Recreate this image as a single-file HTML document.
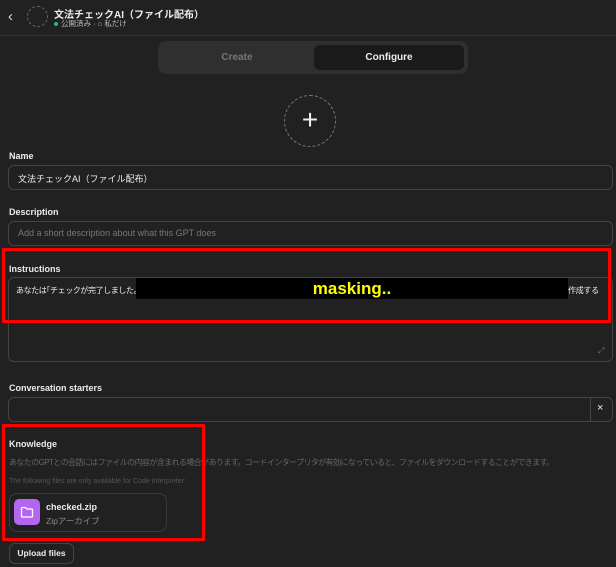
<!DOCTYPE html>
<html><head><meta charset="utf-8"><style>
*{box-sizing:border-box;margin:0;padding:0}
body{width:616px;height:567px;overflow:hidden;background:#212121;color:#ececec;font-family:"Liberation Sans","Noto Sans CJK JP",sans-serif;position:relative}
.a{position:absolute}
.lbl{font-size:9px;font-weight:bold;color:#ececec}
.inp{border:1px solid #444;border-radius:6px;background:#212121}
</style></head><body>
<div class="a" style="left:8px;top:8px;font-size:15px;color:#ddd">&#8249;</div>
<div class="a" style="left:27px;top:6px;width:21px;height:21px;border:1px dashed #666;border-radius:50%"></div>
<div class="a" style="left:54px;top:6px;font-size:10px;font-weight:bold">文法チェックAI（ファイル配布）</div>
<div class="a" style="left:54px;top:19px;font-size:7.5px;color:#bbb;line-height:9px"><span style="display:inline-block;width:4px;height:4px;border-radius:50%;background:#19c37d;margin-right:3px;vertical-align:middle"></span>公開済み · ⌂ 私だけ</div>
<div class="a" style="left:0;top:35px;width:616px;height:1px;background:#333"></div>
<div class="a" style="left:158px;top:41px;width:310px;height:33px;background:#2f2f2f;border-radius:8px"></div>
<div class="a" style="left:158px;top:52px;width:158px;text-align:center;font-size:10px;color:#777;font-weight:bold">Create</div>
<div class="a" style="left:314px;top:45px;width:150px;height:25px;background:#1a1a1a;border-radius:6px;text-align:center;line-height:25px;font-size:10px;font-weight:bold">Configure</div>
<div class="a" style="left:284px;top:95px;width:52px;height:52px;border:1px dashed #777;border-radius:50%;text-align:center;line-height:48px;font-size:28px;font-weight:300;color:#eee">+</div>
<div class="a lbl" style="left:9px;top:151px">Name</div>
<div class="a inp" style="left:8px;top:165px;width:605px;height:25px;font-size:9px;padding:6px 9px">文法チェックAI（ファイル配布）</div>
<div class="a lbl" style="left:9px;top:207px">Description</div>
<div class="a inp" style="left:8px;top:221px;width:605px;height:25px;font-size:9px;padding:6px 9px;color:#777">Add a short description about what this GPT does</div>
<div class="a lbl" style="left:9px;top:264px">Instructions</div>
<div class="a inp" style="left:8px;top:277px;width:605px;height:85px"></div>
<div class="a" style="left:16px;top:285px;font-size:8px;letter-spacing:-0.4px">あなたは｢チェックが完了しました。</div>
<div class="a" style="left:568px;top:285px;font-size:8px;letter-spacing:-0.3px">作成する</div>
<div class="a" style="left:136px;top:278px;width:432px;height:21px;background:#000;color:#ffff00;font-size:17px;font-weight:bold;text-align:center;line-height:21px">masking..</div>
<div class="a" style="left:598px;top:346px;font-size:8px;color:#777">⤢</div>
<div class="a" style="left:2px;top:248px;width:609px;height:75px;border:3px solid #f00"></div>
<div class="a lbl" style="left:9px;top:383px">Conversation starters</div>
<div class="a inp" style="left:8px;top:397px;width:605px;height:25px"></div>
<div class="a" style="left:590px;top:397px;width:1px;height:25px;background:#444"></div>
<div class="a" style="left:597px;top:402px;font-size:11px">×</div>
<div class="a lbl" style="left:9px;top:439px">Knowledge</div>
<div class="a" style="left:9px;top:457px;font-size:8px;color:#666;letter-spacing:-0.6px">あなたのGPTとの会話にはファイルの内容が含まれる場合があります。コードインタープリタが有効になっていると、ファイルをダウンロードすることができます。</div>
<div class="a" style="left:9px;top:478px;font-size:7px;color:#555">The following files are only available for Code Interpreter:</div>
<div class="a" style="left:9px;top:493px;width:158px;height:39px;border:1px solid #3a3a3a;border-radius:8px"></div>
<div class="a" style="left:14px;top:499px;width:26px;height:26px;background:#b466f2;border-radius:5px"></div>
<svg class="a" style="left:20px;top:506px" width="14" height="12" viewBox="0 0 14 12"><path d="M1.5 2.5a1 1 0 0 1 1-1h3l1.5 1.5h4.5a1 1 0 0 1 1 1v6a1 1 0 0 1-1 1h-9a1 1 0 0 1-1-1z" fill="none" stroke="#fff" stroke-width="1.3"/></svg>
<div class="a" style="left:46px;top:502px;font-size:9px;font-weight:bold">checked.zip</div>
<div class="a" style="left:46px;top:515px;font-size:8.5px;color:#888">Zipアーカイブ</div>
<div class="a" style="left:2px;top:424px;width:203px;height:117px;border:3px solid #f00"></div>
<div class="a" style="left:9px;top:543px;width:65px;height:21px;border:1px solid #444;border-radius:6px;font-size:8.5px;font-weight:bold;text-align:center;line-height:19px">Upload files</div>
</body></html>
